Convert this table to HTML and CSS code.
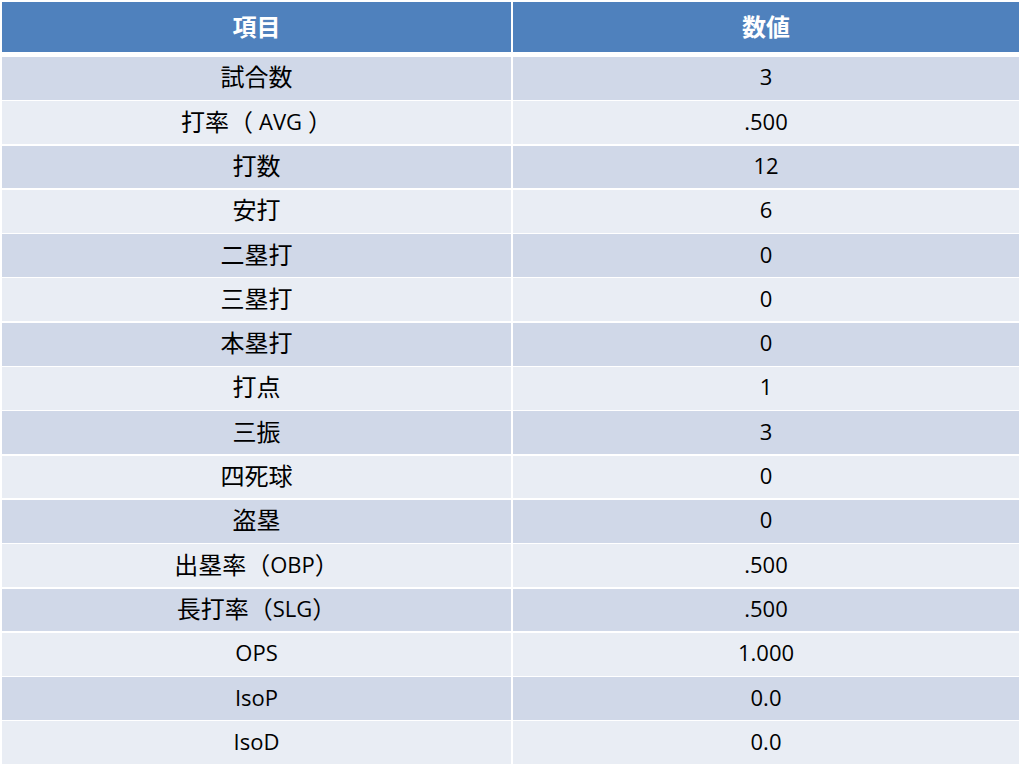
FILE: index.html
```html
<!DOCTYPE html>
<html lang="ja">
<head>
<meta charset="utf-8">
<link rel="stylesheet" href="styles.css">
</head>
<body>
<div class="table">
  <div class="cell head">項目</div>
  <div class="cell head">数値</div>

  <div class="cell odd">試合数</div><div class="cell odd"><span class="lat">3</span></div>
  <div class="cell even">打率（<span class="lat wide">AVG</span>）</div><div class="cell even"><span class="lat">.500</span></div>
  <div class="cell odd">打数</div><div class="cell odd"><span class="lat">12</span></div>
  <div class="cell even">安打</div><div class="cell even"><span class="lat">6</span></div>
  <div class="cell odd">二塁打</div><div class="cell odd"><span class="lat">0</span></div>
  <div class="cell even">三塁打</div><div class="cell even"><span class="lat">0</span></div>
  <div class="cell odd">本塁打</div><div class="cell odd"><span class="lat">0</span></div>
  <div class="cell even">打点</div><div class="cell even"><span class="lat">1</span></div>
  <div class="cell odd">三振</div><div class="cell odd"><span class="lat">3</span></div>
  <div class="cell even">四死球</div><div class="cell even"><span class="lat">0</span></div>
  <div class="cell odd">盗塁</div><div class="cell odd"><span class="lat">0</span></div>
  <div class="cell even">出塁率（<span class="lat">OBP</span>）</div><div class="cell even"><span class="lat">.500</span></div>
  <div class="cell odd">長打率（<span class="lat">SLG</span>）</div><div class="cell odd"><span class="lat">.500</span></div>
  <div class="cell even"><span class="lat">OPS</span></div><div class="cell even"><span class="lat">1.000</span></div>
  <div class="cell odd"><span class="lat">IsoP</span></div><div class="cell odd"><span class="lat">0.0</span></div>
  <div class="cell even"><span class="lat">IsoD</span></div><div class="cell even"><span class="lat">0.0</span></div>
</div>
</body>
</html>
```

FILE: styles.css
```css
html, body {
  margin: 0;
  padding: 0;
  background: #ffffff;
}

body {
  font-family: "Noto Sans CJK JP", sans-serif;
}

.table {
  margin: 2px 0 0 2px;
  width: 1017px;
  display: grid;
  grid-template-columns: 509px 506px;
  grid-template-rows: 53.5px repeat(16, 42.8px);
  column-gap: 2px;
  row-gap: 1.5px;
}

.cell {
  display: flex;
  align-items: center;
  justify-content: center;
  font-size: 24px;
  color: #000000;
  line-height: 1;
  padding-bottom: 4px;
  box-sizing: border-box;
}

.head {
  background: #4f81bd;
  color: #ffffff;
  font-weight: 700;
  height: 50px;
  align-self: start;
  padding-bottom: 2px;
}

.odd {
  background: #d0d8e8;
}

.even {
  background: #e9edf4;
}

.lat {
  font-family: "Open Sans", "Noto Sans CJK JP", sans-serif;
  font-size: 22px;
}

.wide {
  margin: 0 6px;
}
```
